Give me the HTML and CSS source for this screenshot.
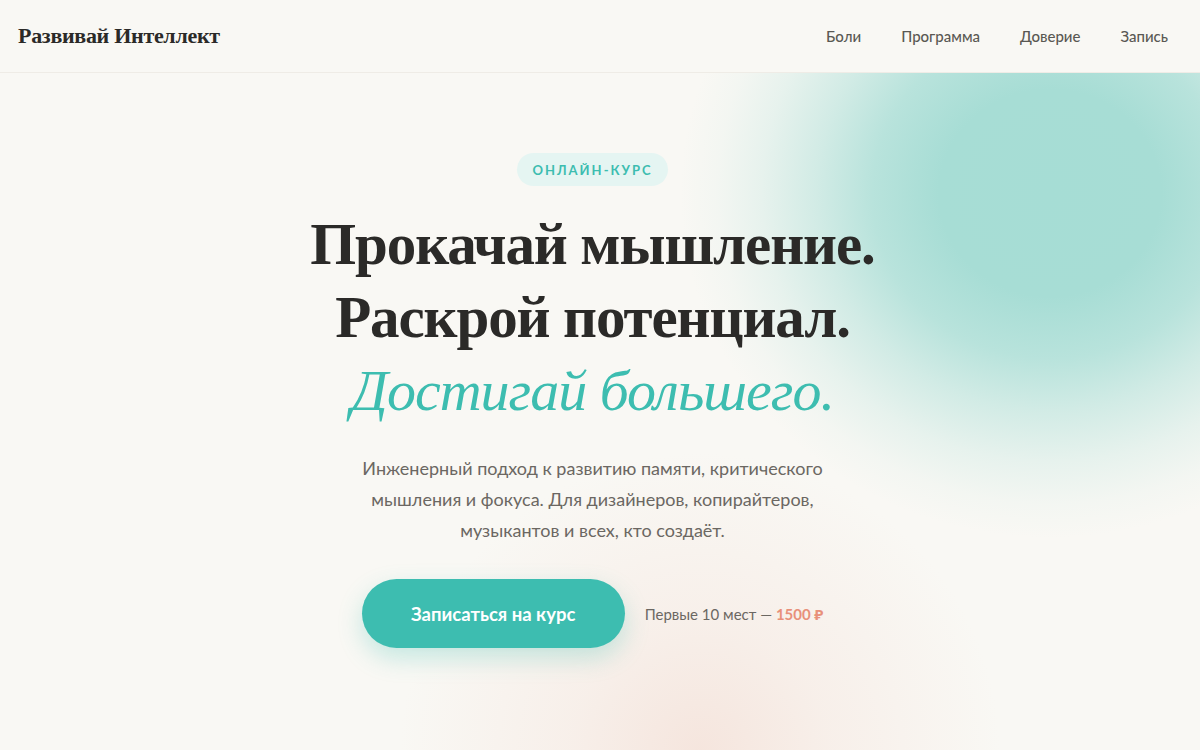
FILE: index.html
```html
<!DOCTYPE html>
<html lang="ru">
<head>
<meta charset="utf-8">
<title>Развивай Интеллект — онлайн-курс</title>
<link rel="stylesheet" href="styles.css">
</head>
<body>
  <header class="site-header">
    <a class="logo" href="#">Развивай Интеллект</a>
    <nav class="nav">
      <a href="#pains">Боли</a>
      <a href="#program">Программа</a>
      <a href="#trust">Доверие</a>
      <a href="#signup">Запись</a>
    </nav>
  </header>

  <main class="hero">
    <span class="badge">Онлайн-курс</span>
    <h1 class="title">
      <span class="title-line">Прокачай мышление.</span>
      <span class="title-line">Раскрой потенциал.</span>
      <span class="title-line accent">Достигай большего.</span>
    </h1>
    <p class="lead">Инженерный подход к развитию памяти, критического мышления и фокуса. Для дизайнеров, копирайтеров, музыкантов и всех, кто создаёт.</p>
    <div class="cta">
      <a class="btn" href="#signup">Записаться на курс</a>
      <span class="cta-note">Первые 10 мест — <strong class="price">1500 ₽</strong></span>
    </div>
  </main>
</body>
</html>
```

FILE: styles.css
```css
* {
  box-sizing: border-box;
}

html,
body {
  margin: 0;
  height: 100%;
}

body {
  background: #f9f8f4;
  color: #2b2a28;
  font-family: "Lato", "Noto Sans", sans-serif;
  overflow: hidden;
}

a {
  color: inherit;
  text-decoration: none;
}

/* ---------- header ---------- */

.site-header {
  height: 73px;
  display: flex;
  align-items: center;
  justify-content: space-between;
  padding: 0 32px 0 18px;
  background: #f9f8f4;
  border-bottom: 1px solid #efece6;
  position: relative;
  z-index: 2;
}

.logo {
  font-family: "Liberation Serif", serif;
  font-weight: 700;
  font-size: 22px;
  color: #2b2a28;
  letter-spacing: -0.3px;
}

.nav {
  display: flex;
  gap: 40px;
}

.nav a {
  font-size: 15px;
  font-weight: 500;
  color: #5a5853;
}

/* ---------- hero ---------- */

.hero {
  min-height: calc(100% - 73px);
  display: flex;
  flex-direction: column;
  align-items: center;
  text-align: center;
  padding: 80px 15px 0 0;
  background:
    radial-gradient(ellipse 370px 345px at 1050px 120px,
      #a6ddd5 0%,
      #a7ddd5 30%,
      rgba(166, 221, 213, 0.78) 48%,
      rgba(166, 221, 213, 0.48) 63%,
      rgba(166, 221, 213, 0.22) 78%,
      rgba(166, 221, 213, 0.07) 90%,
      rgba(166, 221, 213, 0) 100%),
    radial-gradient(circle at 700px 680px,
      rgba(245, 228, 220, 0.95) 0,
      rgba(246, 232, 225, 0.55) 130px,
      rgba(249, 248, 244, 0) 300px),
    #f9f8f4;
}

.badge {
  display: inline-block;
  padding: 9px 15px 8px;
  border-radius: 999px;
  background: #e5f5f2;
  color: #3dbdb0;
  font-size: 13px;
  font-weight: 700;
  letter-spacing: 2px;
  text-transform: uppercase;
}

.title {
  margin: 22px 0 0;
  font-family: "Liberation Serif", serif;
  font-weight: 700;
  font-size: 59px;
  line-height: 73px;
  letter-spacing: -1.1px;
  color: #2b2a28;
}

.title-line {
  display: block;
}

.title .accent {
  color: #3dbdb0;
  font-style: italic;
  font-weight: 400;
  font-size: 58px;
  letter-spacing: -1px;
}

.lead {
  max-width: 490px;
  margin: 26px 0 0;
  font-size: 18px;
  line-height: 31px;
  color: #6b6762;
}

.cta {
  display: flex;
  align-items: center;
  gap: 20px;
  margin-top: 33px;
}

.btn {
  display: inline-flex;
  align-items: center;
  justify-content: center;
  width: 263px;
  height: 69px;
  border-radius: 999px;
  background: #3dbdb0;
  color: #fff;
  font-size: 18.5px;
  font-weight: 700;
  box-shadow: 0 10px 24px rgba(61, 189, 176, 0.28);
}

.cta-note {
  font-size: 15px;
  color: #6b6762;
}

.price {
  color: #e8907a;
  font-weight: 700;
}
```
